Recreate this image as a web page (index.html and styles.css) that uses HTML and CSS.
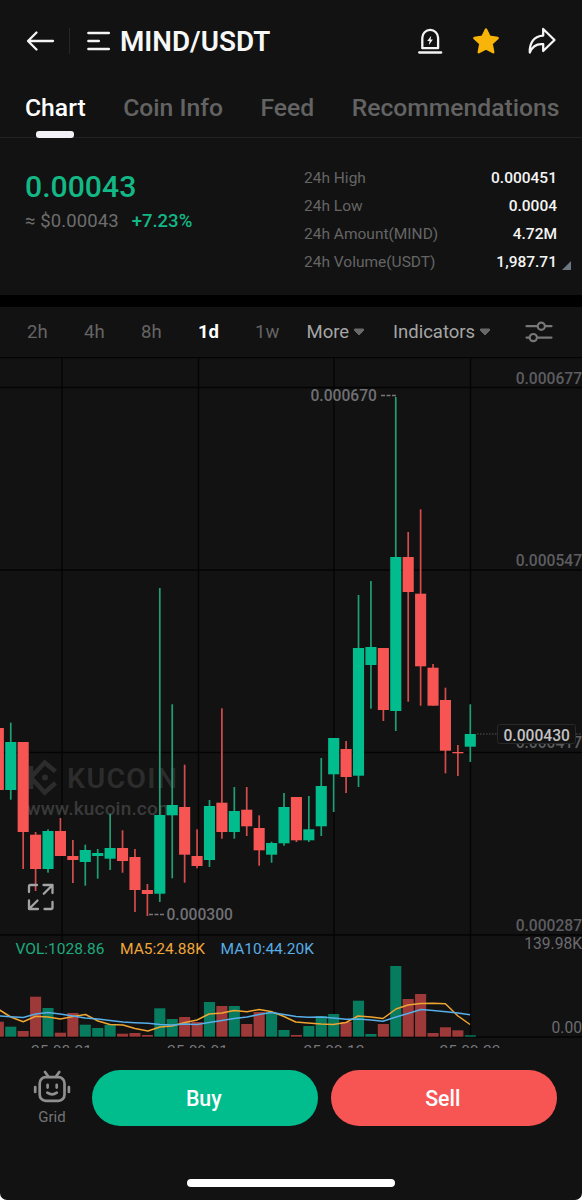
FILE: index.html
```html
<!DOCTYPE html>
<html lang="en">
<head>
<meta charset="utf-8">
<title>MIND/USDT</title>
<link rel="stylesheet" href="styles.css">
</head>
<body>
<main class="screen">
  <header class="header">
    <svg class="icon-back" width="30" height="24" viewBox="0 0 30 24"><path d="M27 12H2.5M10.500 3.500L2 12l8.500 8.500"/></svg>
    <span class="header-divider"></span>
    <svg class="icon-menu" width="24" height="24" viewBox="0 0 24 24"><path d="M1.500 4h20.200M1.500 12h10.200M1.500 20h20.200"/></svg>
    <h1 class="pair">MIND/USDT</h1>
    <div class="header-actions">
      <svg class="icon-line" width="28" height="30" viewBox="0 0 28 30"><path d="M6.3 22.2V11.8a7.9 7.9 0 0 1 15.8 0v10.4zM3.2 26.500h22"/><path class="bolt" d="M15.200 9.800l-4 5.300h2.300l-.6 4 4-5.500h-2.300z"/></svg>
      <svg class="icon-star" width="30" height="30" viewBox="0 0 30 30"><path d="M15 3.600l3.500 7.200 8.100 1.200-6 5.700 1.600 8.500L15 22.500l-7.200 3.700 1.600-8.500-6-5.700 8.100-1.200z"/></svg>
      <svg class="icon-line icon-share" width="32" height="30" viewBox="0 0 32 30"><path d="M17.200 3L28.500 14 17.200 25v-6.800C10.500 17.400 6.400 20.200 3.800 26.500 3.300 16.500 8.400 9.800 17.200 9.600z"/></svg>
    </div>
  </header>

  <nav class="tabs">
    <a class="tab tab-active">Chart</a>
    <a class="tab">Coin Info</a>
    <a class="tab">Feed</a>
    <a class="tab">Recommendations</a>
  </nav>

  <section class="summary">
    <div class="price-block">
      <div class="price">0.00043</div>
      <div class="price-sub"><span>≈ $0.00043</span><span class="change">+7.23%</span></div>
    </div>
    <dl class="stats">
      <div class="stat"><dt>24h High</dt><dd>0.000451</dd></div>
      <div class="stat"><dt>24h Low</dt><dd>0.0004</dd></div>
      <div class="stat"><dt>24h Amount(MIND)</dt><dd>4.72M</dd></div>
      <div class="stat"><dt>24h Volume(USDT)</dt><dd>1,987.71</dd></div>
    </dl>
    <span class="corner"></span>
  </section>

  <div class="intervals">
    <span class="interval">2h</span>
    <span class="interval">4h</span>
    <span class="interval">8h</span>
    <span class="interval interval-active">1d</span>
    <span class="interval">1w</span>
    <span class="dropdown dropdown-more">More<svg width="12" height="8" viewBox="0 0 12 8"><path d="M1.500 1h9v1.500L6 7 1.500 2.500z"/></svg></span>
    <span class="dropdown">Indicators<svg width="12" height="8" viewBox="0 0 12 8"><path d="M1.500 1h9v1.500L6 7 1.500 2.500z"/></svg></span>
    <svg class="icon-settings" width="28" height="24" viewBox="0 0 28 24"><path d="M1.500 6.200h10.800M20.300 6.200h6.200M1.500 17.600h2.800M12.300 17.600h14.200"/><circle cx="16.300" cy="6.200" r="3.600"/><circle cx="8.300" cy="17.600" r="3.600"/></svg>
  </div>

  <svg class="chart" width="582" height="691" viewBox="0 357 582 691">
    <path class="grid" d="M0 357.500H582M0 387.500H582M0 570H582M0 752.500H582M0 935H582M0 1037H582M62 357V1037M198.500 357V1037M334 357V1037M470.500 357V1037"/>
    <g class="watermark">
      <path d="M31 766v23M55.500 771.500L44.700 762.500 31 777.500 44.700 792.500 55.500 783"/>
      <circle cx="45" cy="777.500" r="3"/>
      <text class="wm-name" x="67" y="788" textLength="110">KUCOIN</text>
      <text class="wm-url" x="26.500" y="815" textLength="148">www.kucoin.com</text>
    </g>
    <g id="candles"></g>
    <g id="volumes"></g>
    <polyline class="ma5" points="-2,1009 10.800,1017 23.200,1021.700 35.700,1016.300 48,1017 60.500,1019 73,1016.500 85.500,1014.500 98,1021 110,1024.500 123,1025 135,1028.500 148,1031 160,1027 172,1026 185,1022.500 197,1020 209,1014 222,1013 234,1010.500 247,1011.700 259,1009.500 271,1011.500 284,1016.500 295.700,1022 308,1023 321,1024 333,1024.500 346,1022.500 358,1016 371,1017 383,1018.500 396,1009 408,1005 420.600,1003.500 433,1003.300 445.400,1003.800 458,1016 470,1024.500"/>
    <polyline class="ma10" points="-2,1016 10.800,1016.700 23.200,1017.500 35.700,1014 48,1012.500 60,1014 73,1016 85,1018 98,1019 110,1020.500 123,1022 135,1022.700 148,1023.300 160,1024.500 172,1025 185,1024 197,1024.500 209,1022.500 222,1020.500 234,1018.500 247,1017 259,1014.500 271,1012.500 284,1014.500 296,1016.500 308,1017.300 321,1017 333,1018 346,1019.300 358,1019 371,1020 383,1021.300 396,1017 408,1013.500 421,1009.500 433,1010.500 446,1011.700 458,1013 470,1014.700"/>

    <g class="axis">
      <text x="582" y="383.500">0.000677</text>
      <text x="582" y="565.500">0.000547</text>
      <text x="582" y="748">0.000417</text>
      <text x="582" y="930.500">0.000287</text>
      <text class="axis-vol" x="582" y="949">139.98K</text>
      <text class="axis-vol" x="582" y="1032.500">0.00</text>
    </g>
    <path class="leader" d="M381 395.500H396M149 914.500H164"/>
    <text class="extreme" x="310.500" y="400.500">0.000670</text>
    <text class="extreme" x="166.500" y="919.500">0.000300</text>
    <path class="last-line" d="M477 734H582"/>
    <rect class="last-box" x="497.500" y="724.500" width="78" height="19" rx="2"/>
    <text class="last-text" x="503.500" y="740.500">0.000430</text>

    <g class="legend">
      <text class="legend-vol" x="15.500" y="953.500" textLength="89">VOL:1028.86</text>
      <text class="legend-ma5" x="120" y="953.500" textLength="85">MA5:24.88K</text>
      <text class="legend-ma10" x="220.500" y="953.500" textLength="93.500">MA10:44.20K</text>
    </g>
    <g class="dates">
      <text x="61.500" y="1056">25-08-21</text>
      <text x="197.500" y="1056">25-09-01</text>
      <text x="334" y="1056">25-09-12</text>
      <text x="470" y="1056">25-09-23</text>
    </g>
    <path class="expand" d="M29 892v-5.500q0-1.500 1.500-1.500H37M43.500 885H52.500V893M52 885.500L43.800 893.700M29 900.500V909H38M29.500 908.500L37.500 900.500M44.500 909H51q1.500 0 1.500-1.500V902"/>
  </svg>

  <footer class="trade-bar">
    <div class="grid-bot">
      <svg class="icon-bot" width="38" height="36" viewBox="0 0 38 36"><rect x="6.700" y="7.200" width="24.800" height="23.600" rx="6"/><path d="M15.300 6.500L12 2M23 6.500L26.300 2M2.200 17v5M35.900 17v5M14.600 14.800v2.800M23.700 14.800v2.800M14.300 22.700q4.900 3.200 9.500 0"/></svg>
      <span class="grid-label">Grid</span>
    </div>
    <button class="trade buy"><span>Buy</span></button>
    <button class="trade sell"><span>Sell</span></button>
  </footer>
  <div class="home-indicator"></div>
</main>
<script src="chart.js"></script>
</body>
</html>
```

FILE: styles.css
```css
* { box-sizing: border-box; }
body {
  margin: 0;
  background: #fff;
  font-family: Roboto, "Liberation Sans", sans-serif;
  color: #fff;
}
.screen {
  width: 582px;
  height: 1200px;
  background: #121212;
  border-radius: 0 0 7px 7px;
  overflow: hidden;
  display: flex;
  flex-direction: column;
}
svg { display: block; flex: none; }

/* Header */
.header {
  height: 82px;
  padding: 0 24px 0 25.500px;
  display: flex;
  align-items: center;
}
.icon-back, .icon-menu, .icon-line {
  fill: none;
  stroke: #f4f4f4;
  stroke-width: 2.3;
  stroke-linecap: round;
  stroke-linejoin: round;
}
.icon-menu { stroke-width: 2.700; }
.icon-line .bolt { fill: #f4f4f4; stroke: none; }
.header-divider { width: 1px; height: 26px; background: #272727; margin: 0 17px 0 13px; }
.pair { margin: 1px 0 0 9.500px; font-size: 27.800px; font-weight: 600; line-height: 32px; color: #f7f7f7; }
.header-actions { margin-left: auto; display: flex; align-items: center; gap: 27px; }
.icon-share { margin-left: -2px; }
.icon-star { fill: #f8b408; stroke: #f8b408; stroke-width: 2.500; stroke-linejoin: round; }

/* Tabs */
.tabs {
  height: 56px;
  padding: 9px 0 0 25px;
  display: flex;
  gap: 37.500px;
  border-bottom: 1px solid #222;
  font-size: 24.700px;
  line-height: 34px;
  font-weight: 500;
  color: #636363;
}
.tab { position: relative; white-space: nowrap; }
.tab-active { color: #fff; }
.tab-active::after {
  content: "";
  position: absolute;
  left: 11px;
  top: 40px;
  width: 38px;
  height: 7px;
  border-radius: 3px;
  background: #f2f1f7;
}

/* Price summary */
.summary {
  position: relative;
  height: 157px;
  padding: 26px 25px 0;
  display: flex;
  justify-content: space-between;
}
.price { padding-top: 5px; font-size: 30.200px; line-height: 36px; font-weight: 500; color: #12b886; }
.price-sub { margin-top: 5px; display: flex; gap: 13px; font-size: 18.500px; line-height: 23px; letter-spacing: 0.100px; color: #6d6d6d; }
.change { color: #12b886; font-weight: 500; letter-spacing: 0; }
.stats { width: 253px; margin: 0; display: flex; flex-direction: column; }
.stat { display: flex; justify-content: space-between; font-size: 15.500px; line-height: 28px; }
.stat dt { color: #656565; }
.stat dd { margin: 0; font-weight: 500; color: #f5f5f5; }
.corner {
  position: absolute;
  right: 11px;
  bottom: 25px;
  border-left: 9px solid transparent;
  border-bottom: 9px solid #6b7785;
}

/* Chart interval picker */
.intervals {
  height: 62px;
  border-top: 12px solid #000;
  padding: 0 29px 0 27px;
  display: flex;
  align-items: center;
  font-size: 18.500px;
  color: #646464;
}
.interval { width: 57px; }
.interval-active { color: #fff; font-weight: 700; }
.interval:nth-child(5) { width: 51.500px; }
.dropdown { display: flex; align-items: center; gap: 4px; color: #a5a5a5; }
.dropdown svg { fill: #686868; stroke: #686868; stroke-width: 1; stroke-linejoin: round; }
.dropdown-more { width: 86.500px; }
.icon-settings { margin-left: auto; fill: none; stroke: #777; stroke-width: 2.200; stroke-linecap: round; }

/* Chart */
.grid { fill: none; stroke: #040404; stroke-width: 1.300; }
.watermark path { fill: none; stroke: #2c2c2d; stroke-width: 4.500; }
.watermark circle, .watermark text { fill: #2c2c2d; }
.watermark .wm-name { font-size: 28.500px; font-weight: 600; }
.watermark .wm-url { font-size: 19px; font-weight: 500; fill: #3a3a3a; }
.up { fill: #01bc8d; }
.down { fill: #f75454; }
.wick.up { fill: #1f9f76; }
.wick.down { fill: #d44d4c; }
.vol.up { fill: #077b5d; }
.vol.down { fill: #9d3939; }
.ma5, .ma10 { fill: none; stroke-width: 1.500; stroke-linejoin: round; }
.ma5 { stroke: #efa531; }
.ma10 { stroke: #57aee8; }
.axis { font-size: 15.600px; font-weight: 500; fill: #5d5d61; text-anchor: end; }
.axis-vol { font-weight: 400; fill: #6b6b70; }
.leader { stroke: #77777b; stroke-width: 1.500; stroke-dasharray: 4 1.500; }
.extreme { font-size: 15.600px; font-weight: 500; fill: #707074; }
.last-line { stroke: #55555a; stroke-width: 1; stroke-dasharray: 1.500 1.500; }
.last-box { fill: #121212; stroke: #29292b; }
.last-text { font-size: 15.600px; font-weight: 500; fill: #c2c2c4; }
.legend { font-size: 15.500px; }
.legend-vol { fill: #1eaa7c; }
.legend-ma5 { fill: #f0a63a; }
.legend-ma10 { fill: #57ade6; }
.dates { font-size: 15.500px; fill: #77777b; text-anchor: middle; }
.expand { fill: none; stroke: #a4a4a4; stroke-width: 2.300; stroke-linecap: round; stroke-linejoin: round; }

/* Trade bar */
.trade-bar {
  height: 99px;
  padding: 22px 25px 0 33px;
  display: flex;
  align-items: flex-start;
}
.grid-bot { width: 38px; margin-right: 20.500px; display: flex; flex-direction: column; align-items: center; }
.icon-bot { fill: none; stroke: #8f8f8f; stroke-width: 2.700; stroke-linecap: round; stroke-linejoin: round; }
.grid-label { margin-top: 2px; font-size: 15px; line-height: 18px; color: #747474; }
.trade {
  width: 226.500px;
  height: 56px;
  border: 0;
  padding: 0 2px 0 0;
  border-radius: 28px;
  font-family: inherit;
  font-size: 21.300px;
  font-weight: 500;
  color: #fff;
}
.buy { background: #01bc8d; }
.sell { background: #f75454; margin-left: 12.500px; }
.home-indicator { width: 208px; height: 8px; margin: 32px 0 0 187px; border-radius: 4px; background: #fff; }
```

FILE: chart.js
```js
// Each row: high, body top, body bottom, low, direction (1 = up), volume top
const rows = [
  [728, 728, 790, 790, 0, 1021.7], [722.7, 742, 790, 799.7, 1, 1026.7],
  [742, 742, 832, 869, 0, 1031], [832, 834.7, 869, 891, 0, 996.7],
  [829.3, 831, 869, 872.7, 1, 1008], [818, 831, 856, 856, 0, 1032.7],
  [840, 856, 860, 883, 0, 1013], [844.7, 850, 862, 885.7, 1, 1024.7],
  [849, 853, 856, 878.7, 1, 1028], [814, 848, 858.7, 870, 1, 1024.7],
  [830.3, 848, 861, 872.7, 0, 1033.7], [849, 857, 890, 912, 0, 1033],
  [884, 890, 894, 916, 0, 1035], [588, 815, 893.7, 902, 1, 1008.3],
  [704.3, 805, 815.3, 878.3, 1, 1019], [764.7, 807, 854.7, 882.7, 0, 1017],
  [829.3, 856, 866, 868.3, 0, 1022], [800, 806, 860, 867, 1, 1002],
  [708.3, 802.7, 832, 838.7, 0, 1006], [787, 811, 832, 838.7, 1, 1006],
  [787, 809.7, 826.3, 836, 0, 1024], [815.3, 828, 850.3, 865.7, 0, 1012],
  [841.7, 843, 854.7, 862.7, 1, 1012.3], [793, 807, 843.3, 845.7, 1, 1030],
  [797, 797, 840.3, 842, 0, 1035], [796, 829.3, 840.3, 842, 1, 1026],
  [758, 786, 826.3, 836, 1, 1016], [738, 738, 774.3, 812, 1, 1014],
  [741, 749, 777, 793, 0, 1022], [595, 648, 775.7, 787, 1, 1000.7],
  [581, 647, 665, 708.7, 1, 1034], [648, 648, 710, 721, 0, 1024],
  [397, 557, 711, 731, 1, 966], [532, 557, 592, 701.7, 0, 999],
  [509.3, 593.7, 666.3, 705.7, 0, 994], [664, 667.7, 705.7, 705.7, 0, 1033],
  [687.7, 700, 750.7, 773.3, 0, 1027.3], [745, 752, 753.3, 776, 0, 1030.3],
  [704.3, 734, 746.7, 762, 1, 1035.3]
];
const STEP = 12.42;
const LAST_X = 470.3;
const BASE = 1036.7;

function bar(parent, x, top, width, bottom, cls) {
  const r = document.createElementNS("http://www.w3.org/2000/svg", "rect");
  r.setAttribute("x", (x - width / 2).toFixed(2));
  r.setAttribute("y", top);
  r.setAttribute("width", width);
  r.setAttribute("height", (bottom - top).toFixed(2));
  r.setAttribute("class", cls);
  parent.appendChild(r);
}

const candles = document.getElementById("candles");
const volumes = document.getElementById("volumes");
rows.forEach(([high, top, bottom, low, up, vol], i) => {
  const x = LAST_X - STEP * (rows.length - 1 - i);
  const dir = up ? "up" : "down";
  bar(candles, x, high, 1.7, low, "wick " + dir);
  bar(candles, x, top, 11.1, bottom, "body " + dir);
  bar(volumes, x, vol, 11.1, BASE, "vol " + dir);
});
```
